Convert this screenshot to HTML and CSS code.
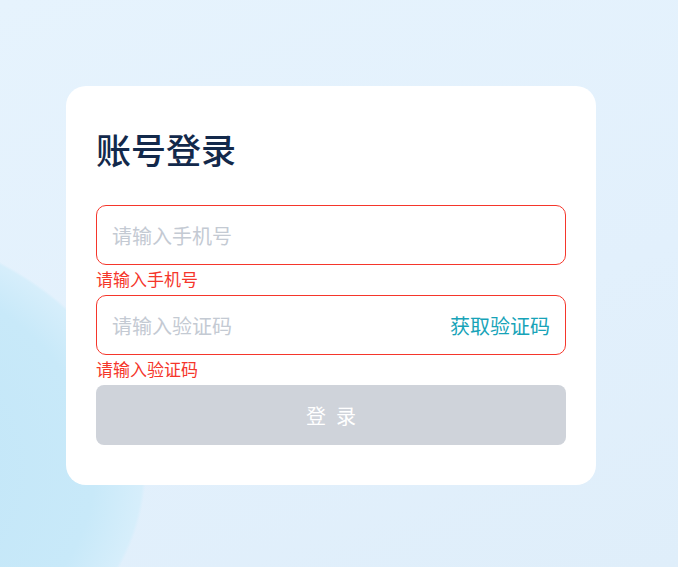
FILE: index.html
```html
<!doctype html>
<html lang="zh">
<head>
<meta charset="utf-8">
<meta name="viewport" content="width=device-width, initial-scale=1">
<title>账号登录</title>
<link rel="stylesheet" href="styles.css">
</head>
<body>

<div class="page">
    <div class="login-card">
        <h1 class="title">账号登录</h1>

        <div class="field is-error">
            <input class="field-input" type="text" placeholder="请输入手机号">
        </div>
        <p class="field-msg">请输入手机号</p>

        <div class="field is-error">
            <input class="field-input" type="text" placeholder="请输入验证码">
            <span class="get-code">获取验证码</span>
        </div>
        <p class="field-msg">请输入验证码</p>

        <button class="btn-login" type="button" disabled>登录</button>
    </div>
</div>

</body>
</html>
```

FILE: styles.css
```css
html,body{
    margin: 0;
    height: 100%;
}
body{
    font-family: "Noto Sans CJK SC", "Noto Sans", sans-serif;
    background-color: #e3f1fc;
    background-image:
        radial-gradient(346px 255px at -200px 470px, #bfe4f7 0, #c8e9f9 85%, #d6eefb 99%, rgba(227,241,252,0) 100%),
        linear-gradient(160deg, #e6f3fd 0%, #e2f0fc 60%, #dfeefa 100%);
}
.page{
    display: flex;
    align-items: flex-start;
    height: 100%;
    box-sizing: border-box;
    padding: 86px 0 0 66px;
}
.login-card{
    width: 530px;
    box-sizing: border-box;
    padding: 40px 30px 40px;
    background-color: #fff;
    border-radius: 20px;
}
.title{
    margin: 0 0 33px;
    font-size: 35px;
    line-height: 46px;
    font-weight: 500;
    color: #13294b;
}
.field{
    display: flex;
    align-items: center;
    height: 60px;
    box-sizing: border-box;
    padding: 0 15px;
    border: 1px solid #dcdfe6;
    border-radius: 10px;
}
.field.is-error{
    border-color: #f5362b;
}
.field-input{
    flex: 1;
    min-width: 0;
    height: 100%;
    padding: 0;
    border: 0;
    outline: none;
    background: transparent;
    font-family: inherit;
    font-size: 20px;
    color: #333;
}
.field-input::placeholder{
    color: #c4cad3;
}
.get-code{
    font-size: 20px;
    color: #17a3b8;
    cursor: pointer;
}
.field-msg{
    margin: 0;
    height: 30px;
    font-size: 17px;
    line-height: 28px;
    color: #f5362b;
}
.btn-login{
    display: block;
    width: 100%;
    height: 60px;
    padding: 0 0 0 10px;
    border: 0;
    border-radius: 8px;
    background-color: #cfd3da;
    font-family: inherit;
    font-size: 20px;
    letter-spacing: 10px;
    color: #fff;
}
```
